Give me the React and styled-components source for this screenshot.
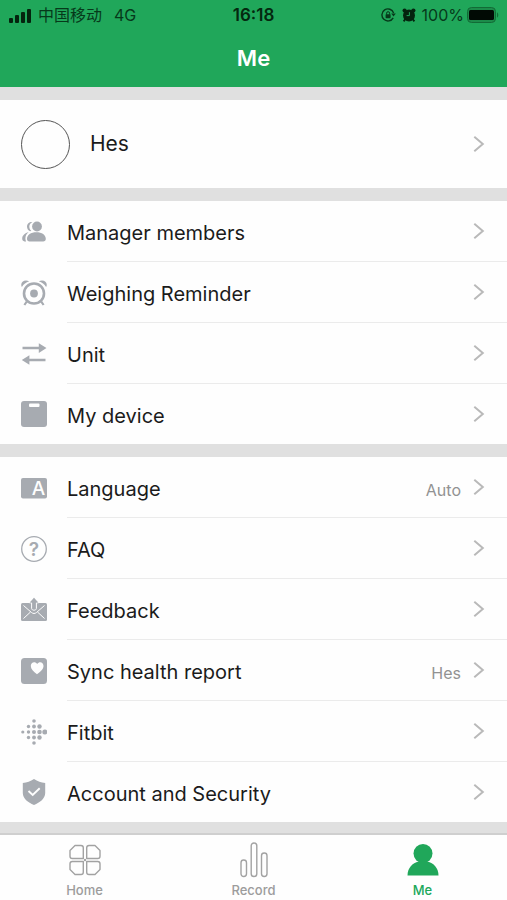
import React from 'react';
import styled, { createGlobalStyle } from 'styled-components';

const GREEN = '#20a75a';
const ICON = '#a7abb1';

const GlobalStyle = createGlobalStyle`
    body {
        margin: 0;
        background: #e0e0e0;
        font-family: Inter, "Noto Sans CJK SC", sans-serif;
        color: #1b1b1b;
    }

    * {
        box-sizing: border-box;
    }

    button {
        font-family: inherit;
        color: inherit;
        border: none;
        background: none;
        padding: 0;
        cursor: pointer;
    }

    svg {
        display: block;
        flex: none;
    }
`;

const Page = styled.div`
    min-height: 100vh;
    display: flex;
    flex-direction: column;
    background: #e0e0e0;
`;

const Header = styled.header`
    background: ${GREEN};
    height: 87px;
`;

const StatusBar = styled.div`
    display: grid;
    grid-template-columns: 1fr auto 1fr;
    align-items: center;
    height: 30px;
    padding: 0 8px;
    font-size: 16px;
    line-height: 20px;
    color: #06391a;
`;

const StatusGroup = styled.div`
    display: flex;
    align-items: center;
    justify-content: ${props => props.$end ? 'flex-end' : 'flex-start'};
    gap: 6px;
`;

const Network = styled.span`
    margin-left: 6px;
`;

const BatteryLevel = styled.span`
    display: flex;
    align-items: center;
    gap: 3px;
`;

const Clock = styled.span`
    font-size: 17px;
    font-weight: 600;
    color: #04280f;
`;

const Title = styled.h1`
    margin: 0;
    font-size: 22px;
    line-height: 56px;
    font-weight: 600;
    text-align: center;
    color: #fff;
`;

const Content = styled.main`
    flex: 1;
    display: flex;
    flex-direction: column;
    gap: 13px;
    padding: 13px 0 11px;
`;

const ProfileButton = styled.button`
    display: flex;
    align-items: center;
    width: 100%;
    height: 88px;
    padding: 0 22px 0 21px;
    gap: 20px;
    background: #fefefe;
    text-align: left;
`;

const Avatar = styled.span`
    width: 49px;
    height: 49px;
    border: 1px solid #555;
    border-radius: 50%;
`;

const ProfileName = styled.span`
    flex: 1;
    font-size: 21px;
    line-height: 24px;
`;

const Group = styled.ul`
    list-style: none;
    margin: 0;
    padding: 0;
    background: #fefefe;
`;

const RowButton = styled.button`
    display: flex;
    align-items: center;
    width: 100%;
    padding-left: 21px;
    gap: 20px;
    text-align: left;
`;

const RowBody = styled.span`
    flex: 1;
    display: flex;
    align-items: center;
    height: 61px;
    padding-right: 22px;
    border-bottom: 1px solid #ebebeb;

    li:last-child & {
        height: 60px;
        border-bottom: none;
    }
`;

const Label = styled.span`
    flex: 1;
    padding-top: 4px;
    font-size: 20px;
    line-height: 24px;
`;

const Value = styled.span`
    margin-right: 12px;
    padding-top: 6px;
    font-size: 16px;
    line-height: 20px;
    color: #929292;
`;

const TabBar = styled.nav`
    display: grid;
    grid-template-columns: repeat(3, 1fr);
    height: 67px;
    border-top: 2px solid #cfcfcf;
    background: #fefefe;
`;

const Tab = styled.button`
    display: flex;
    flex-direction: column;
    align-items: center;
    padding-top: 7px;
    gap: 4px;
    font-size: 13px;
    line-height: 16px;
    font-weight: 500;
    color: ${props => props.$active ? GREEN : '#9c9c9c'};
`;

const SignalIcon = () => (
    <svg width="24" height="15" viewBox="0 0 24 15" fill="#04240e">
        <rect x="1" y="10" width="4" height="5" rx="1" />
        <rect x="7" y="7" width="4" height="8" rx="1" />
        <rect x="13" y="4" width="4" height="11" rx="1" />
        <rect x="19" y="1" width="4" height="14" rx="1" />
    </svg>
);

const RotationLockIcon = () => (
    <svg width="15" height="14" viewBox="0 0 15 14" fill="none" stroke="#06391a">
        <path d="M12.2 9.8A6 6 0 1 1 12.6 5" strokeWidth="1.4" />
        <path d="M10.2 5.6h4.6l-2.3 3z" fill="#06391a" stroke="none" />
        <rect x="4.6" y="6.2" width="5" height="4" rx=".6" fill="#06391a" stroke="none" />
        <path d="M5.6 6.5V5.2a1.5 1.5 0 0 1 3 0v1.3" />
    </svg>
);

const StatusAlarmIcon = () => (
    <svg width="14" height="14" viewBox="0 0 14 14" fill="#04240e">
        <circle cx="7" cy="7.4" r="6" />
        <circle cx="2.6" cy="2.6" r="2.1" />
        <circle cx="11.4" cy="2.6" r="2.1" />
        <path d="M3.4 11l-1.8 2.4M10.6 11l1.8 2.4" stroke="#04240e" strokeWidth="1.8" />
        <path d="M7.4 4.2v3.4H4.6" fill="none" stroke={GREEN} />
    </svg>
);

const BatteryIcon = () => (
    <svg width="32" height="16" viewBox="0 0 32 16">
        <rect x=".5" y=".5" width="28" height="15" rx="4" fill="#1c8c4a" stroke="#126b36" />
        <rect x="2" y="3" width="25" height="10" rx="1.5" fill="#010a04" />
        <path d="M30 5.5c1.7.6 1.7 4.4 0 5z" fill="#126b36" />
    </svg>
);

const Chevron = () => (
    <svg width="12" height="18" viewBox="0 0 12 18" fill="none" stroke="#b9b9b9" strokeWidth="2">
        <path d="M1.3 1.8L9.8 9l-8.500 7.200" />
    </svg>
);

const RowIcon = ({ children }) => (
    <svg width="26" height="26" viewBox="0 0 26 26" fill={ICON}>{children}</svg>
);

const MembersIcon = () => (
    <RowIcon>
        <path d="M11.400 3C8.200 2.800 6 5 6 7.600c0 2.200 1.200 3.900 3.100 4.700.5-.1.9-.3 1.200-.5-1.300-1-2-2.500-2-4.300 0-1.800 1-3.400 3.100-4.500z" />
        <circle cx="16" cy="7.500" r="4.900" />
        <path d="M7.600 13.200C4 14 1.200 16.300 1.200 19.600c0 1.800.8 2.800 2.400 2.800h1.500c-.5-.7-.7-1.600-.7-2.800 0-2.700 1-4.800 3.200-6.400z" />
        <path d="M15.400 13.200c5.500 0 9.400 2.700 9.400 6.600 0 1.700-1 2.600-2.700 2.600H8.600c-1.700 0-2.600-.9-2.600-2.600 0-3.900 3.900-6.600 9.400-6.600z" />
    </RowIcon>
);

const ReminderIcon = () => (
    <RowIcon>
        <g fill="none" stroke={ICON}>
            <circle cx="13" cy="13.500" r="10" strokeWidth="2.600" />
            <path d="M5.800 21.500l-2.400 3.500M20.200 21.500l2.400 3.500" strokeWidth="2.200" />
        </g>
        <circle cx="13" cy="13.500" r="3.900" />
        <path d="M.9 7C-1.500 2.800 3-1.200 8.200 1.300 5 2.500 2.600 4.300.9 7zM25.100 7C27.500 2.800 23-1.200 17.800 1.300 21 2.500 23.400 4.300 25.100 7z" />
    </RowIcon>
);

const UnitIcon = () => (
    <RowIcon>
        <path d="M1.500 5.800h16.300V2.200L25.500 7l-7.700 4.900V8.300H1.500zM24.500 17.700H8.400v-3.500L.8 19l7.600 4.800v-3.600h16.100z" />
    </RowIcon>
);

const DeviceIcon = () => (
    <RowIcon>
        <rect x="0" y="0" width="26" height="26" rx="3" />
        <rect x="8" y="2.500" width="10.500" height="3.500" rx="1" fill="#fefefe" />
    </RowIcon>
);

const LanguageIcon = () => (
    <RowIcon>
        <rect x="0" y="3" width="26" height="20.500" rx="2" />
        <text x="17.500" y="20" fontSize="19" fontWeight="500" textAnchor="middle" fill="#fefefe">A</text>
    </RowIcon>
);

const FaqIcon = () => (
    <RowIcon>
        <circle cx="13" cy="13" r="12.300" fill="none" stroke={ICON} strokeWidth="1.300" />
        <text x="13" y="20" fontSize="19" fontWeight="600" textAnchor="middle">?</text>
    </RowIcon>
);

const FeedbackIcon = () => (
    <RowIcon>
        <rect x="0" y="6" width="26" height="18" rx="1.500" />
        <g fill="none" stroke="#fefefe">
            <path d="M2.500 8.500l8 7c1.500 1.300 3.500 1.300 5 0l8-7M2.500 21.500l7-6.500M23.500 21.500l-7-6.500" />
        </g>
        <path d="M13 .8l4.600 5h-2.200v5.600c0 2.400-4.800 2.400-4.800 0V5.800H8.400z" stroke="#fefefe" />
        <path d="M13 .8l4.300 4.700H8.700z" />
    </RowIcon>
);

const HealthIcon = () => (
    <RowIcon>
        <rect x="0" y="0" width="26" height="26" rx="3.500" />
        <path d="M16 16.300C12.500 13.500 9.800 11 9.800 8c0-4 4.500-5 6.400-1.900C18.100 3 22.500 4 22.500 8c0 3-2.800 5.500-6.500 8.300z" fill="#fefefe" />
    </RowIcon>
);

// x, y, radius: the dots grow towards the right
const FITBIT_DOTS = [
    [13, 2, 1.8],
    [7.5, 7.5, 1.7], [13, 7.5, 1.9], [18.5, 7.5, 2.2],
    [1.8, 13, 1.6], [7.5, 13, 1.7], [13, 13, 2], [18.5, 13, 2.3], [23.8, 13, 2.5],
    [7.5, 18.5, 1.7], [13, 18.5, 1.9], [18.5, 18.5, 2.2],
    [13, 24, 1.8],
];

const FitbitIcon = () => (
    <RowIcon>
        {FITBIT_DOTS.map(([x, y, r]) => <circle key={`${x}-${y}`} cx={x} cy={y} r={r} />)}
    </RowIcon>
);

const SecurityIcon = () => (
    <RowIcon>
        <path d="M13 0c3.600 2.500 7 3.600 11.200 4v10c0 5.500-5.200 9.500-11.200 12C7 23.500 1.800 19.500 1.800 14V4C6 3.600 9.400 2.500 13 0z" />
        <path d="M7.500 12l4.200 4 7-6.700" fill="none" stroke="#fefefe" strokeWidth="1.900" />
    </RowIcon>
);

const HomeIcon = () => (
    <svg width="32" height="36" viewBox="0 0 32 36" fill="none" stroke="#a2a2a2" strokeWidth="1.400">
        <path d="M6 3.500h6q2.300 0 2.300 2.300v10.700h-11q-2.300 0-2.300-2.300V8.500z" strokeLinejoin="round" />
        <path d="M26 3.500h-6q-2.300 0-2.300 2.300v10.700h11q2.300 0 2.300-2.300V8.500z" strokeLinejoin="round" />
        <path d="M6 32.500h6q2.300 0 2.300-2.300V19.500h-11q-2.300 0-2.300 2.300v5.700z" strokeLinejoin="round" />
        <path d="M26 32.500h-6q-2.300 0-2.300-2.300V19.500h11q2.300 0 2.300 2.300v5.700z" strokeLinejoin="round" />
        <circle cx="16" cy="18" r="1.200" fill="#a2a2a2" stroke="none" />
    </svg>
);

const RecordIcon = () => (
    <svg width="28" height="36" viewBox="0 0 28 36" fill="none" stroke="#a2a2a2" strokeWidth="1.400">
        <rect x="1" y="18" width="5.500" height="16.500" rx="2.700" />
        <rect x="11.200" y="1" width="5.600" height="33.500" rx="2.800" />
        <rect x="21.500" y="11" width="5.500" height="23.500" rx="2.700" />
    </svg>
);

const MeIcon = () => (
    <svg width="32" height="36" viewBox="0 0 32 36" fill={GREEN}>
        <circle cx="16" cy="11.500" r="9.500" />
        <path d="M.5 33.500C.5 26 5.500 21 11.500 19.500h9C26.500 21 31.500 26 31.500 33.500z" />
    </svg>
);

const deviceRows = [
    { label: 'Manager members', Icon: MembersIcon },
    { label: 'Weighing Reminder', Icon: ReminderIcon },
    { label: 'Unit', Icon: UnitIcon },
    { label: 'My device', Icon: DeviceIcon },
];

const settingRows = [
    { label: 'Language', Icon: LanguageIcon, value: 'Auto' },
    { label: 'FAQ', Icon: FaqIcon },
    { label: 'Feedback', Icon: FeedbackIcon },
    { label: 'Sync health report', Icon: HealthIcon, value: 'Hes' },
    { label: 'Fitbit', Icon: FitbitIcon },
    { label: 'Account and Security', Icon: SecurityIcon },
];

const tabs = [
    { label: 'Home', Icon: HomeIcon },
    { label: 'Record', Icon: RecordIcon },
    { label: 'Me', Icon: MeIcon, active: true },
];

const MenuGroup = ({ rows }) => (
    <Group>
        {rows.map(({ label, Icon, value }) => (
            <li key={label}>
                <RowButton type="button">
                    <Icon />
                    <RowBody>
                        <Label>{label}</Label>
                        {value ? <Value>{value}</Value> : null}
                        <Chevron />
                    </RowBody>
                </RowButton>
            </li>
        ))}
    </Group>
);

const App = () => (
    <Page>
        <GlobalStyle />
        <Header>
            <StatusBar>
                <StatusGroup>
                    <SignalIcon />
                    <span>中国移动</span>
                    <Network>4G</Network>
                </StatusGroup>
                <Clock>16:18</Clock>
                <StatusGroup $end>
                    <RotationLockIcon />
                    <StatusAlarmIcon />
                    <BatteryLevel>
                        100%
                        <BatteryIcon />
                    </BatteryLevel>
                </StatusGroup>
            </StatusBar>
            <Title>Me</Title>
        </Header>
        <Content>
            <ProfileButton type="button">
                <Avatar />
                <ProfileName>Hes</ProfileName>
                <Chevron />
            </ProfileButton>
            <MenuGroup rows={deviceRows} />
            <MenuGroup rows={settingRows} />
        </Content>
        <TabBar>
            {tabs.map(({ label, Icon, active }) => (
                <Tab key={label} type="button" $active={active}>
                    <Icon />
                    {label}
                </Tab>
            ))}
        </TabBar>
    </Page>
);

export default App;
